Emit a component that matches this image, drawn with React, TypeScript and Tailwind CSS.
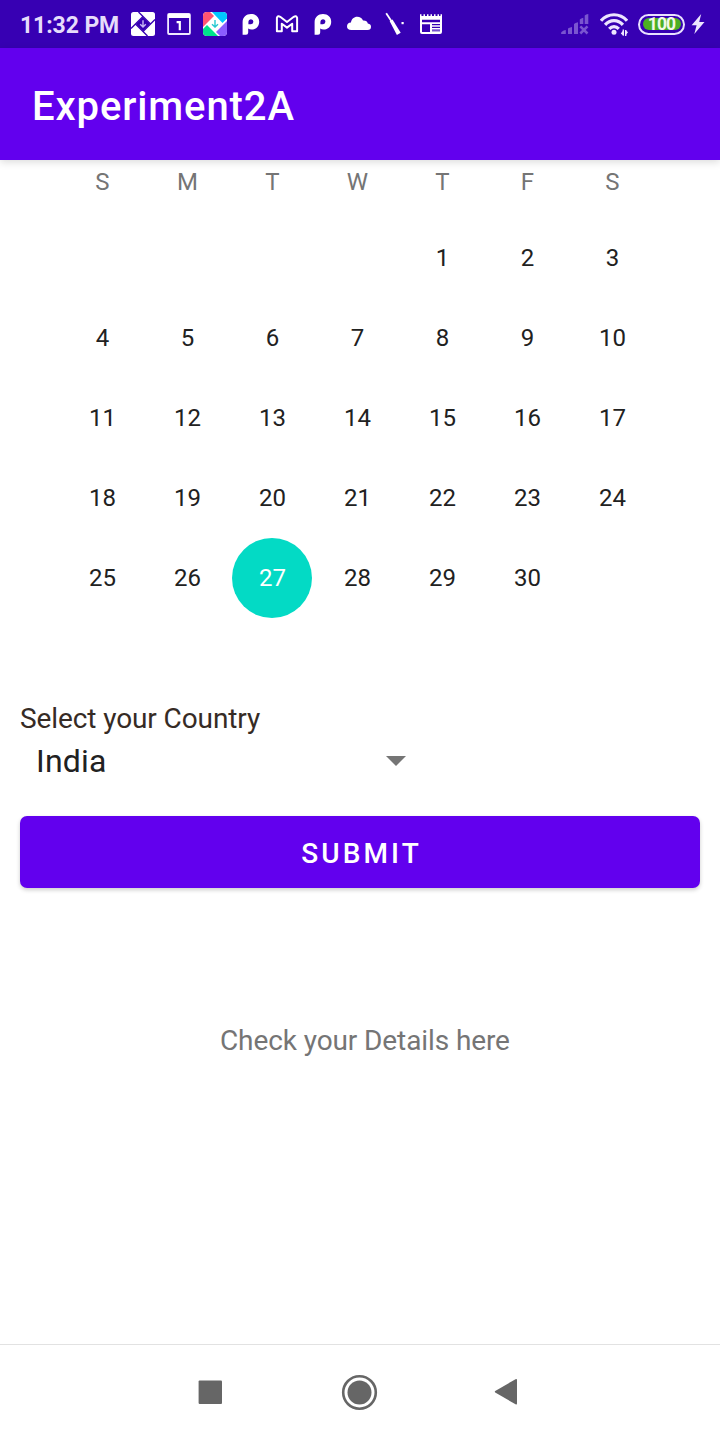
import React from "react";

const weekdays = ["S", "M", "T", "W", "T", "F", "S"];
const FIRST_WEEKDAY = 4;
const DAYS_IN_MONTH = 30;
const SELECTED_DAY = 27;

function PinwheelMono() {
  return (
    <svg width="24" height="24" viewBox="0 0 24 24">
      <rect width="24" height="24" rx="2.5" fill="#fff" />
      <path d="M12 5L19 12 12 19 5 12Z" fill="#3700b3" />
      <path d="M7.5 0L19.5 12M24 7.5L12 19.5M16.5 24L4.5 12M0 16.5L12 4.5" stroke="#3700b3" strokeWidth="1.4" />
      <path d="M12 8.2V15M9.2 12.3L12 15.1 14.8 12.3" stroke="#c9b8f5" strokeWidth="1.4" fill="none" />
    </svg>
  );
}

function PinwheelColor() {
  return (
    <svg width="24" height="24" viewBox="0 0 24 24">
      <rect width="24" height="24" rx="4" fill="#fff" />
      <path d="M4 0H7L11 4 3 12 0 15V4Q0 0 4 0Z" fill="#ff5572" />
      <path d="M9 0H20Q24 0 24 4V6.5L19.5 11Z" fill="#00c8ff" />
      <path d="M24 9V20Q24 24 20 24H17L13 20Z" fill="#8b5cff" />
      <path d="M4 13L15 24H4Q0 24 0 20V17Z" fill="#00e38c" />
      <path d="M12 8V15M9 12.2L12 15.1 15 12.2" stroke="#27c8d0" strokeWidth="1.4" fill="none" />
    </svg>
  );
}

function CalendarOne() {
  return (
    <svg width="24" height="24" viewBox="0 0 24 24">
      <rect x="1.1" y="2" width="21.8" height="20" rx="1" fill="none" stroke="#efe8ff" strokeWidth="1.8" />
      <path d="M1 2H23V6H1Z" fill="#fff" />
      <path d="M9.6 10.2H12.8V18.2" fill="none" stroke="#fff" strokeWidth="2.2" />
    </svg>
  );
}

function RoundedP() {
  return (
    <svg width="24" height="24" viewBox="0 0 24 24">
      <path
        fill="#fff"
        fillRule="evenodd"
        d="M3.6 10.2C3.6 5.2 7.2 2 12 2C16.9 2 20.2 5.2 20.2 9.7C20.2 14.3 17 17.6 12.7 17.6Q10.5 17.6 9.2 16.6V20.6Q9.2 22.8 7 22.8H3.6ZM9.4 12.2H11.8A2.5 2.5 0 1 0 9.4 9.7Z"
      />
    </svg>
  );
}

function MailM() {
  return (
    <svg width="24" height="24" viewBox="0 0 24 24">
      <path
        d="M1.9 5.8Q2.8 3.2 5.2 4.8L12 10 18.8 4.8Q21.2 3.2 22.1 5.8V19.2H17.2V11.7L12 15.6 6.8 11.7V19.2H1.9Z"
        fill="none"
        stroke="#fff"
        strokeWidth="2"
        strokeLinejoin="round"
      />
    </svg>
  );
}

function Cloud() {
  return (
    <svg width="24" height="24" viewBox="0 0 24 24">
      <path
        fill="#fff"
        d="M4.3 18Q0 18 0 14.2C0 11.8 1.7 10.5 3.9 10.4C4.6 7 7 4.8 10.2 4.8C13 4.8 14.9 6.2 16 8.4C18.8 8.2 20.4 9.5 20.8 11.5Q24 12 24 14.8Q24 18 20.5 18Z"
      />
    </svg>
  );
}

function Wand() {
  return (
    <svg width="24" height="24" viewBox="0 0 24 24">
      <path d="M3.2 1.2L8.5 9.2" stroke="#fff" strokeWidth="1.8" />
      <path d="M6.7 9.2L9.5 7.5 17.7 20.8 13.9 23Z" fill="#fff" />
      <rect x="18.5" y="10" width="2.2" height="2.2" fill="#fff" />
    </svg>
  );
}

function Notepad() {
  return (
    <svg width="24" height="24" viewBox="0 0 24 24">
      <path
        d="M1 2.2H2.5V4H4.5V2.2H6V4H8V2.2H9.5V4H11.5V2.2H13V4H15V2.2H16.5V4H18.5V2.2H20V4H21.5V2.2H23V20Q23 22 21 22H3Q1 22 1 20Z"
        fill="#fff"
      />
      <path d="M3 7.8H21V10.2H3ZM3 12.2H11V20H3Z" fill="#3700b3" />
      <path d="M13 12.6H21M13 15.4H21" stroke="#3700b3" strokeWidth="1.1" />
      <path d="M13 18.4H21" stroke="#7653cc" strokeWidth="2.2" />
    </svg>
  );
}

function Signal() {
  return (
    <svg width="28" height="24" viewBox="0 0 28 24" fill="#7a55d0">
      <path d="M0 21.5Q0 19 4.8 18V22H.5ZM7 16.5Q8 15.7 11 15V22H7ZM13 12Q14 11 17 10.2V22H13ZM18.8 7.5Q20 6.2 22.3 5.8V12H18.8ZM23.7 3.5Q25 2.3 27.3 2V12H23.7Z" />
      <path d="M19.3 14.3L26.5 21.5M26.5 14.3L19.3 21.5" stroke="#7a55d0" strokeWidth="2.5" />
    </svg>
  );
}

function Wifi() {
  return (
    <svg width="28" height="24" viewBox="0 0 28 24" fill="none" stroke="#ede5ff" strokeWidth="3.2">
      <path d="M1 8.8C8 .7 20 .7 27 8.8" />
      <path d="M5.1 12.9C10 7.3 18 7.3 22.9 12.9" />
      <path d="M9.2 16.9C12 13.9 16 13.9 18.8 16.9" />
      <circle cx="14" cy="20.2" r="2.5" fill="#ede5ff" stroke="none" />
      <path d="M23.3 17.6V23.5M25.7 18V24" strokeWidth="1.4" />
      <path d="M20.8 21.5L23.6 18V24M28 20.2L25.4 23.6V18" fill="#ede5ff" stroke="none" />
    </svg>
  );
}

function StatusBar() {
  return (
    <div className="flex h-12 items-center bg-[#3700b3] pl-5">
      <span className="w-[111px] whitespace-nowrap pt-[3px] text-[23px] font-bold leading-6 tracking-[-0.1px] text-[#e6dcfb]">
        11:32 PM
      </span>
      <div className="flex gap-3">
        <PinwheelMono />
        <CalendarOne />
        <PinwheelColor />
        <RoundedP />
        <MailM />
        <RoundedP />
        <Cloud />
        <Wand />
        <Notepad />
      </div>
      <div className="ml-auto flex items-center pr-[15px]">
        <Signal />
        <div className="ml-[11px]">
          <Wifi />
        </div>
        <div className="ml-[10px] flex h-[21px] w-[47px] rounded-full border-2 border-[#e9e0ff] p-[2.5px]">
          <div className="flex flex-1 items-center justify-center rounded-full bg-[#4caf23] pt-0.5 text-[17.5px] font-bold leading-none tracking-[-0.9px] text-[#f3f8e8]">
            100
          </div>
        </div>
        <svg className="ml-1.5" width="14" height="22" viewBox="0 0 14 22">
          <path d="M10.2 1L.6 12.3H5.6L3.3 21 13.5 9H8.2Z" fill="#ede5ff" />
        </svg>
      </div>
    </div>
  );
}

function MonthGrid() {
  const days = Array.from({ length: DAYS_IN_MONTH }, (_, i) => i + 1);
  return (
    <div className="ml-[59.5px] w-[595px] indent-[0.8px] text-center text-[24px] tracking-[-0.2px]">
      <div className="grid grid-cols-7 leading-[44px] text-[#757575]">
        {weekdays.map((name, i) => (
          <span key={i}>{name}</span>
        ))}
      </div>
      <div className="mt-[14px] grid auto-rows-[80px] grid-cols-7 justify-items-center leading-[80px] text-[#212121]">
        {Array.from({ length: FIRST_WEEKDAY }, (_, i) => (
          <span key={`blank-${i}`} />
        ))}
        {days.map((day) => (
          <button
            key={day}
            className={day === SELECTED_DAY ? "size-20 rounded-full bg-[#03dac5] indent-[0.8px] text-white" : "size-20 indent-[0.8px]"}
          >
            {day}
          </button>
        ))}
      </div>
    </div>
  );
}

function NavigationBar() {
  return (
    <nav className="flex h-24 items-center border-t border-[#e2e2e2] bg-white pb-px pl-[198px] text-[#666]">
      <svg width="24" height="24" viewBox="0 0 24 24">
        <rect x=".6" y=".6" width="23.4" height="23.4" rx="1" fill="currentColor" />
      </svg>
      <svg className="ml-[119px]" width="37" height="37" viewBox="0 0 37 37">
        <circle cx="18.5" cy="18.5" r="16.3" fill="none" stroke="currentColor" strokeWidth="2.6" />
        <circle cx="18.5" cy="18.5" r="12" fill="currentColor" />
      </svg>
      <svg className="ml-[116px]" width="24" height="28" viewBox="0 0 24 28">
        <path d="M21.5 1.2Q23 .5 23 2V25.5Q23 27 21.5 26.2L1.2 14.5Q.4 13.8 1.2 13.1Z" fill="currentColor" />
      </svg>
    </nav>
  );
}

export default function App() {
  return (
    <div className="flex h-[1440px] w-[720px] flex-col overflow-hidden bg-white font-['Roboto',sans-serif]">
      <StatusBar />
      <header className="flex h-28 items-center bg-[#6200ee] pl-8 pt-1.5 text-[40px] font-medium tracking-[0.9px] text-white shadow-[0_2px_8px_rgba(0,0,0,0.15)]">
        Experiment2A
      </header>
      <main className="flex flex-1 flex-col">
        <MonthGrid />
        <div className="mt-[82px] px-5">
          <p className="text-[28px] leading-[38px] tracking-[-0.1px] text-[#362b25]">Select your Country</p>
          <div className="flex h-[46px] w-[386px] items-center justify-between pl-4 text-[32px] tracking-[0.2px] text-[#212121]">
            <span>India</span>
            <svg width="20" height="10" viewBox="0 0 20 10">
              <path d="M0 0H20L10 10Z" fill="#757575" />
            </svg>
          </div>
          <button className="mt-8 h-[72px] w-full rounded-[7px] bg-[#6200ee] pl-[3px] pt-1 text-[28px] font-medium tracking-[3.1px] text-white shadow-[0_2px_4px_rgba(0,0,0,0.2)]">
            SUBMIT
          </button>
        </div>
        <p className="mt-[134px] pl-[220px] text-[28px] leading-[38px] tracking-[-0.1px] text-[#757575]">
          Check your Details here
        </p>
      </main>
      <NavigationBar />
    </div>
  );
}
